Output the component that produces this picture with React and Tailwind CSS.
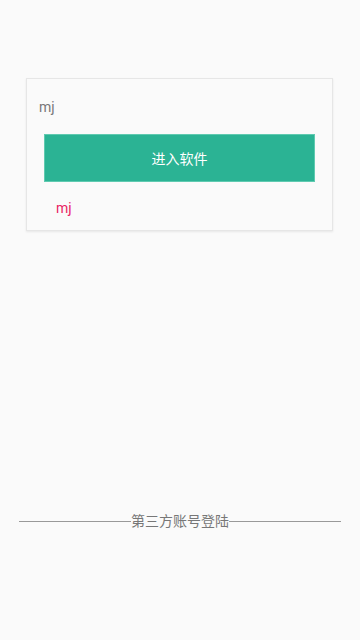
export default function App() {
  return (
    <div
      className="w-[360px] h-[640px] bg-[#fafafa] overflow-hidden flex flex-col"
      style={{ fontFamily: "Roboto, 'Noto Sans CJK SC', sans-serif" }}
    >
      <div className="mt-[78px] ml-[26px] w-[307px] h-[153px] border border-[#e6e6e6] bg-[#fafafa] shadow-[0_1px_2px_rgba(0,0,0,0.08)] flex flex-col">
        <div className="mt-[18px] ml-[12px] h-[20px] leading-[20px] text-[14px] text-[#777]">mj</div>
        <button className="mt-[17px] ml-[17px] w-[271px] h-[48px] pt-[2px] bg-[#2bb394] border border-[#5fcab0] text-white text-[14px] flex items-center justify-center">
          进入软件
        </button>
        <div className="mt-[16px] ml-[29px] h-[20px] leading-[20px] text-[14px] text-[#e91e63]">mj</div>
      </div>
      <div className="mt-[280px] px-[19px] flex items-center h-[20px]">
        <div className="flex-1 h-px bg-[#999]"></div>
        <span className="text-[14px] leading-[20px] text-[#777]">第三方账号登陆</span>
        <div className="flex-1 h-px bg-[#999]"></div>
      </div>
    </div>
  );
}
